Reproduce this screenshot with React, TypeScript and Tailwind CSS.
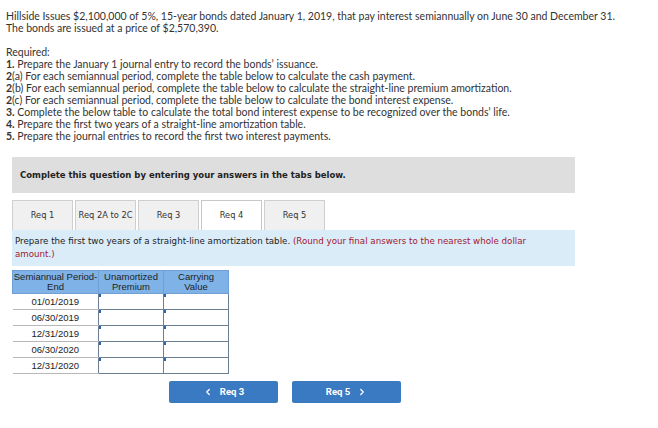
import React from 'react';
import { ChevronLeft, ChevronRight } from 'lucide-react';

const reqs: [string, string][] = [
  ['1.', ' Prepare the January 1 journal entry to record the bonds’ issuance.'],
  ['2', '(a) For each semiannual period, complete the table below to calculate the cash payment.'],
  ['2', '(b) For each semiannual period, complete the table below to calculate the straight-line premium amortization.'],
  ['2', '(c) For each semiannual period, complete the table below to calculate the bond interest expense.'],
  ['3.', ' Complete the below table to calculate the total bond interest expense to be recognized over the bonds’ life.'],
  ['4.', ' Prepare the first two years of a straight-line amortization table.'],
  ['5.', ' Prepare the journal entries to record the first two interest payments.'],
];

const tabs = ['Req 1', 'Req 2A to 2C', 'Req 3', 'Req 4', 'Req 5'];
const dates = ['01/01/2019', '06/30/2019', '12/31/2019', '06/30/2020', '12/31/2020'];

function Cell() {
  return (
    <td className="p-0 h-4 border border-[#6b7f92] bg-white relative">
      <span className="absolute left-0 top-0 w-[2px] h-[3px] bg-[#2f62b0]" />
    </td>
  );
}

export default function App() {
  return (
    <div className="w-[658px] h-[428px] bg-white text-[#333] overflow-hidden">
      <div className="pt-[10px] pl-[6px] font-['Lato',sans-serif] text-[10.5px] leading-[12px]">
        <p>Hillside Issues $2,100,000 of 5%, 15-year bonds dated January 1, 2019, that pay interest semiannually on June 30 and December 31.</p>
        <p>The bonds are issued at a price of $2,570,390.</p>
        <p className="mt-[12px]">Required:</p>
        {reqs.map(([n, r]) => (
          <p key={r}>
            <span className="font-bold">{n}</span>
            {r}
          </p>
        ))}
      </div>

      <div className="ml-[12px] w-[563px] mt-[15px]">
        <div className="h-[36px] bg-[#dedede] flex items-center pl-[8px] font-['DejaVu_Sans',sans-serif] font-bold text-[8.5px] text-[#222]">
          Complete this question by entering your answers in the tabs below.
        </div>

        <div className="flex gap-[2px] mt-[7px] h-[30px] font-['DejaVu_Sans',sans-serif] text-[8.3px] text-[#333]">
          {tabs.map((t) => (
            <div
              key={t}
              className={
                t === 'Req 4'
                  ? 'w-[61px] flex items-center justify-center bg-white border border-[#c8c8c8] border-b-0'
                  : 'w-[61px] flex items-center justify-center bg-[#f0f0f0] border border-[#cfcfcf] border-b-0'
              }
            >
              {t}
            </div>
          ))}
        </div>

        <div className="bg-[#dbecf9] h-[36px] pl-[3px] pr-[40px] pt-[5px] font-['DejaVu_Sans',sans-serif] text-[8.7px] leading-[13px] text-[#222]">
          Prepare the first two years of a straight-line amortization table.{' '}
          <span className="text-[#a3162d]">(Round your final answers to the nearest whole dollar amount.)</span>
        </div>

        <table className="mt-[4px] border-collapse font-['Liberation_Sans',sans-serif] text-[9.5px] leading-[10px] text-[#222]">
          <thead>
            <tr className="bg-[#7fb2e6]">
              <th className="w-[86px] h-[23px] font-normal border border-[#6f9fd4]">Semiannual Period-<br />End</th>
              <th className="w-[65px] font-normal border border-[#6f9fd4]">Unamortized<br />Premium</th>
              <th className="w-[65px] font-normal border border-[#6f9fd4]">Carrying<br />Value</th>
            </tr>
          </thead>
          <tbody>
            {dates.map((d) => (
              <tr key={d}>
                <td className="h-4 text-center border-b border-[#b8b8b8]">{d}</td>
                <Cell />
                <Cell />
              </tr>
            ))}
          </tbody>
        </table>

        <div className="flex gap-[14px] ml-[157px] mt-[7px] font-['Roboto',sans-serif] font-bold text-[9.5px] text-white">
          <button className="w-[109px] h-[22px] bg-[#3a7ac2] rounded-[2px] flex items-center justify-center gap-[7px]">
            <ChevronLeft size={10} strokeWidth={3} /> Req 3
          </button>
          <button className="w-[109px] h-[22px] bg-[#3a7ac2] rounded-[2px] flex items-center justify-center gap-[7px]">
            Req 5 <ChevronRight size={10} strokeWidth={3} />
          </button>
        </div>
      </div>
    </div>
  );
}
